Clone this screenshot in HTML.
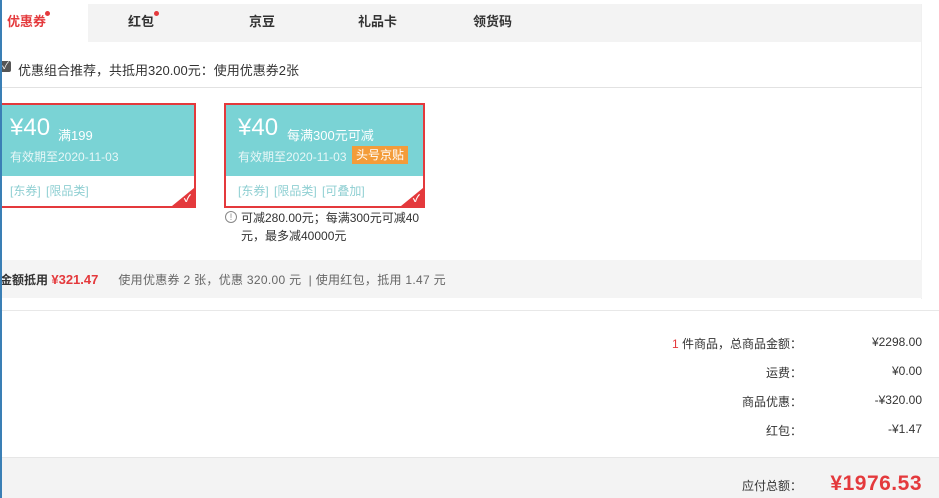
<!DOCTYPE html>
<html><head><meta charset="utf-8"><style>
*{margin:0;padding:0;box-sizing:border-box}
body{width:939px;height:498px;overflow:hidden;background:#fff;font-family:"Liberation Sans","Noto Sans CJK SC",sans-serif;font-size:12px;color:#333;position:relative}
.abs{position:absolute}
.lb{left:0;top:0;width:2px;height:498px;background:#3a7fb5}
.tabs{left:0;top:4px;width:922px;height:38px;background:#f3f3f3}
.tab{position:absolute;top:4px;height:38px;line-height:36px;font-size:13px;font-weight:bold;color:#333}
.dot{position:absolute;width:5px;height:5px;border-radius:50%;background:#e4393c;top:11px}
.card{position:absolute;top:103px;height:105px;border:2px solid #e4393c;background:#fff;overflow:hidden}
.teal{position:absolute;left:0;top:0;right:0;height:71px;background:#7ad3d5;color:#fff}
.big{position:absolute;top:9px;font-size:24px}
.cond{position:absolute;top:20px;font-size:13px}
.date{position:absolute;top:43px;font-size:12px;color:#e8f7f7}
.tags{position:absolute;top:77px;font-size:12px;color:#8fcfd2;word-spacing:2px}
.corner{position:absolute;right:0;bottom:0;width:0;height:0;border-left:22px solid transparent;border-bottom:18px solid #e4393c}
.ck{position:absolute;right:3px;bottom:1px;color:#fff;font-size:10px;font-weight:bold}
.row{position:absolute;font-size:12px;color:#333;text-align:right}
</style></head><body>
<div class="abs lb"></div>
<div class="abs tabs"></div>
<div class="abs" style="left:2px;top:4px;width:86px;height:38px;background:#fff"></div>
<div class="tab" style="left:7px;color:#e4393c">优惠券</div><div class="dot" style="left:45px"></div>
<div class="tab" style="left:128px">红包</div><div class="dot" style="left:154px"></div>
<div class="tab" style="left:249px">京豆</div>
<div class="tab" style="left:358px">礼品卡</div>
<div class="tab" style="left:473px">领货码</div>
<div class="abs" style="left:921px;top:4px;width:1px;height:295px;background:#f0f0f0"></div>

<div class="abs" style="left:0;top:61px;width:11px;height:11px;background:#555;border-radius:2px;color:#fff;font-size:10px;line-height:11px;text-align:center">✓</div>
<div class="abs" style="left:18px;top:60px;font-size:13px;color:#333">优惠组合推荐，共抵用320.00元：使用优惠券2张</div>
<div class="abs" style="left:0;top:87px;width:922px;height:1px;background:#e2e2e2"></div>

<div class="card" style="left:-10px;width:206px">
 <div class="teal"><span class="big" style="left:18px">¥40</span><span class="cond" style="left:66px">满199</span><span class="date" style="left:18px">有效期至2020-11-03</span></div>
 <div class="tags" style="left:18px">[东券] [限品类]</div>
 <div class="corner"></div><div class="ck">✓</div>
</div>
<div class="card" style="left:224px;width:201px">
 <div class="teal"><span class="big" style="left:12px">¥40</span><span class="cond" style="left:61px">每满300元可减</span><span class="date" style="left:12px">有效期至2020-11-03</span><span class="abs" style="left:126px;top:41px;background:#f39c3a;color:#fff;padding:0 4px;line-height:18px;font-size:12px">头号京贴</span></div>
 <div class="tags" style="left:12px">[东券] [限品类] [可叠加]</div>
 <div class="corner"></div><div class="ck">✓</div>
</div>
<div class="abs" style="left:225px;top:211px;width:12px;height:12px;border:1px solid #888;border-radius:50%;font-size:9px;line-height:10px;text-align:center;color:#888">!</div>
<div class="abs" style="left:241px;top:209px;font-size:12px;line-height:18px;width:185px;color:#333">可减280.00元；每满300元可减40元，最多减40000元</div>

<div class="abs" style="left:0;top:260px;width:922px;height:38px;background:#f4f4f4"></div>
<div class="abs" style="left:0;top:271px;font-size:12px;color:#333;white-space:nowrap"><b>金额抵用</b> <b style="color:#e4393c;font-size:13px">¥321.47</b><span style="margin-left:20px;color:#666;letter-spacing:0.3px">使用优惠券 2 张，优惠 320.00 元 &nbsp;| 使用红包，抵用 1.47 元</span></div>
<div class="abs" style="left:0;top:310px;width:939px;height:1px;background:#e8e8e8"></div>

<div class="row" style="right:137px;top:335px"><span style="color:#e4393c">1</span> 件商品，总商品金额：</div><div class="row" style="right:17px;top:335px">¥2298.00</div>
<div class="row" style="right:137px;top:364px">运费：</div><div class="row" style="right:17px;top:364px">¥0.00</div>
<div class="row" style="right:137px;top:393px">商品优惠：</div><div class="row" style="right:17px;top:393px">-¥320.00</div>
<div class="row" style="right:137px;top:422px">红包：</div><div class="row" style="right:17px;top:422px">-¥1.47</div>

<div class="abs" style="left:0;top:457px;width:939px;height:41px;background:#f3f3f3;border-top:1px solid #e6e6e6"></div>
<div class="row" style="right:137px;top:477px">应付总额：</div>
<div class="row" style="right:17px;top:472px;color:#e4393c;font-size:21px;font-weight:bold;letter-spacing:0.5px">¥1976.53</div>
<div class="abs lb"></div>
</body></html>
